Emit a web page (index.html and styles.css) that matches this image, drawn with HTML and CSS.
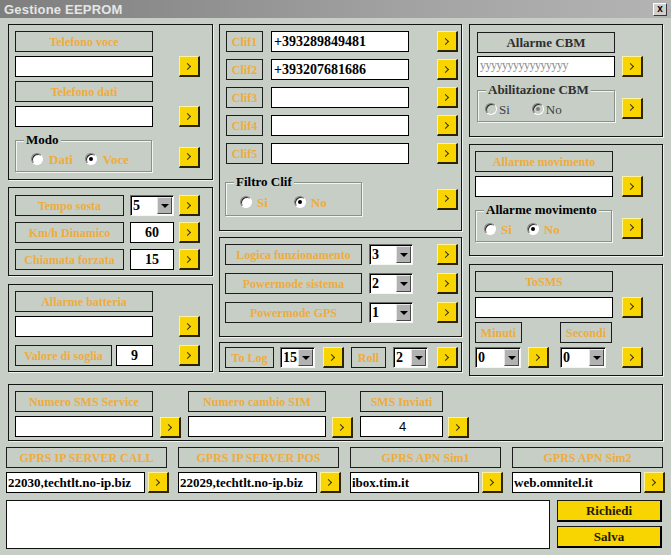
FILE: index.html
```html
<!DOCTYPE html>
<html>
<head>
<meta charset="utf-8">
<title>Gestione EEPROM</title>
<link rel="stylesheet" href="styles.css">
</head>
<body>
<div class="window">
  <div class="titlebar"><span class="title">Gestione EEPROM</span><span class="close">x</span></div>
  <div class="content">
    <div class="columns">
      <div class="col col-left">
        <section class="panel p-phone">
          <div class="lbl">Telefono voce</div>
          <div class="row"><div class="field"></div><div class="btn"></div></div>
          <div class="lbl">Telefono dati</div>
          <div class="row"><div class="field"></div><div class="btn"></div></div>
          <div class="row grow">
            <div class="group">
              <span class="legend">Modo</span>
              <div class="radios"><span class="radio"><i class="dot"></i>Dati</span><span class="radio"><i class="dot on"></i>Voce</span></div>
            </div>
            <div class="btn"></div>
          </div>
        </section>
        <section class="panel p-time">
          <div class="row"><div class="lbl">Tempo sosta</div><div class="sel"><span class="v">5</span><span class="dd"></span></div><div class="btn"></div></div>
          <div class="row"><div class="lbl">Km/h Dinamico</div><div class="field num">60</div><div class="btn"></div></div>
          <div class="row"><div class="lbl">Chiamata forzata</div><div class="field num">15</div><div class="btn"></div></div>
        </section>
        <section class="panel p-batt">
          <div class="lbl wide">Allarme batteria</div>
          <div class="row"><div class="field wide"></div><div class="btn"></div></div>
          <div class="row last"><div class="lbl">Valore di soglia</div><div class="field num">9</div><div class="btn"></div></div>
        </section>
      </div>

      <div class="col col-mid">
        <section class="panel p-clif">
          <div class="row"><div class="lbl">Clif1</div><div class="field">+393289849481</div><div class="btn"></div></div>
          <div class="row"><div class="lbl">Clif2</div><div class="field">+393207681686</div><div class="btn"></div></div>
          <div class="row"><div class="lbl">Clif3</div><div class="field"></div><div class="btn"></div></div>
          <div class="row"><div class="lbl">Clif4</div><div class="field"></div><div class="btn"></div></div>
          <div class="row"><div class="lbl">Clif5</div><div class="field"></div><div class="btn"></div></div>
          <div class="row grow">
            <div class="group">
              <span class="legend">Filtro Clif</span>
              <div class="radios"><span class="radio"><i class="dot"></i>Si</span><span class="radio"><i class="dot on"></i>No</span></div>
            </div>
            <div class="btn"></div>
          </div>
        </section>
        <section class="panel p-logic">
          <div class="row"><div class="lbl">Logica funzionamento</div><div class="sel"><span class="v">3</span><span class="dd"></span></div><div class="btn"></div></div>
          <div class="row"><div class="lbl">Powermode sistema</div><div class="sel"><span class="v">2</span><span class="dd"></span></div><div class="btn"></div></div>
          <div class="row"><div class="lbl">Powermode GPS</div><div class="sel"><span class="v">1</span><span class="dd"></span></div><div class="btn"></div></div>
        </section>
        <section class="panel p-log">
          <div class="lbl log-lbl">To Log</div>
          <div class="sel"><span class="v">15</span><span class="dd"></span></div>
          <div class="btn"></div>
          <div class="lbl roll-lbl">Roll</div>
          <div class="sel"><span class="v">2</span><span class="dd"></span></div>
          <div class="btn"></div>
        </section>
      </div>

      <div class="col col-right">
        <section class="panel p-cbm">
          <div class="lbl dark">Allarme CBM</div>
          <div class="row"><div class="field ghost">yyyyyyyyyyyyyyyy</div><div class="btn"></div></div>
          <div class="row grow">
            <div class="group">
              <span class="legend dim">Abilitazione CBM</span>
              <div class="radios"><span class="radio off"><i class="dot"></i>Si</span><span class="radio off"><i class="dot on"></i>No</span></div>
            </div>
            <div class="btn"></div>
          </div>
        </section>
        <section class="panel p-move">
          <div class="lbl">Allarme movimento</div>
          <div class="row"><div class="field"></div><div class="btn"></div></div>
          <div class="row grow">
            <div class="group">
              <span class="legend">Allarme movimento</span>
              <div class="radios"><span class="radio"><i class="dot"></i>Si</span><span class="radio"><i class="dot on"></i>No</span></div>
            </div>
            <div class="btn"></div>
          </div>
        </section>
        <section class="panel p-tosms">
          <div class="lbl">ToSMS</div>
          <div class="row"><div class="field"></div><div class="btn"></div></div>
          <div class="row"><div class="lbl min-lbl">Minuti</div><div class="lbl sec-lbl">Secondi</div></div>
          <div class="row"><div class="sel"><span class="v">0</span><span class="dd"></span></div><div class="btn"></div><div class="sel sec-sel"><span class="v">0</span><span class="dd"></span></div><div class="btn"></div></div>
        </section>
      </div>
    </div>

    <section class="panel p-sms">
      <div class="stack s1"><div class="lbl">Numero SMS Service</div><div class="field"></div></div>
      <div class="btn"></div>
      <div class="stack s2"><div class="lbl">Numero cambio SIM</div><div class="field"></div></div>
      <div class="btn"></div>
      <div class="stack s3"><div class="lbl">SMS Inviati</div><div class="field sans">4</div></div>
      <div class="btn"></div>
    </section>

    <div class="gprs">
      <div class="cell wide-cell"><div class="lbl">GPRS IP SERVER CALL</div><div class="row"><div class="field small">22030,techtlt.no-ip.biz</div><div class="btn"></div></div></div>
      <div class="cell wide-cell"><div class="lbl">GPRS IP SERVER POS</div><div class="row"><div class="field small">22029,techtlt.no-ip.biz</div><div class="btn"></div></div></div>
      <div class="cell"><div class="lbl">GPRS APN Sim1</div><div class="row"><div class="field small">ibox.tim.it</div><div class="btn"></div></div></div>
      <div class="cell"><div class="lbl">GPRS APN Sim2</div><div class="row"><div class="field small">web.omnitel.it</div><div class="btn"></div></div></div>
    </div>

    <div class="bottom">
      <div class="log"></div>
      <div class="actions">
        <div class="bigbtn">Richiedi</div>
        <div class="bigbtn">Salva</div>
      </div>
    </div>
  </div>
</div>
</body>
</html>
```

FILE: styles.css
```css
* { box-sizing: border-box; }

body {
  margin: 0;
  background: #c6cec6;
  font-family: "Liberation Serif", "Times New Roman", serif;
}

.window {
  width: 671px;
  height: 555px;
  background: #c6cec6;
  overflow: hidden;
}

/* ---------- title bar ---------- */
.titlebar {
  height: 18px;
  background: linear-gradient(90deg, #7e7e7e 0%, #a2a2a2 60%, #b4b4b4 100%);
  display: flex;
  align-items: center;
  justify-content: space-between;
  padding: 0 4px 0 4px;
}
.title {
  font: bold 13px/1 "Liberation Sans Narrow", "Liberation Sans", Arial, sans-serif;
  color: #e4e6e4;
  letter-spacing: 0.2px;
}
.close {
  width: 14px;
  height: 13px;
  background: #d0d0d0;
  border: 1px solid;
  border-color: #ffffff #3a3a3a #3a3a3a #ffffff;
  font: bold 10px/10px "Liberation Sans", Arial, sans-serif;
  color: #000;
  display: flex;
  align-items: center;
  justify-content: center;
}

.content { padding: 6px 6px 0 6px; }

.columns {
  display: flex;
  align-items: flex-start;
  margin-left: 2px;
}
.col { display: flex; flex-direction: column; }
.col-left { width: 205px; }
.col-mid { width: 243px; margin-left: 6px; }
.col-right { width: 194px; margin-left: 7px; }

/* ---------- generic pieces ---------- */
.panel {
  border: 1px solid #141414;
  box-shadow: 1px 1px 0 #eef2ee;
  display: flex;
  flex-direction: column;
}

.row { display: flex; align-items: center; }

.lbl {
  height: 21px;
  flex-shrink: 0;
  border: 1px solid #1c1c1c;
  display: flex;
  align-items: center;
  justify-content: center;
  white-space: nowrap;
  font: bold 12px/1 "Liberation Serif", "Times New Roman", serif;
  color: #eeac3c;
}
.lbl.dark { color: #2e2e2e; font-size: 13px; }

.field {
  height: 21px;
  flex-shrink: 0;
  background: #ffffff;
  border: 1px solid #000;
  padding-left: 2px;
  font: bold 14px/19px "Liberation Serif", "Times New Roman", serif;
  color: #000;
  white-space: nowrap;
  overflow: hidden;
}
.field.num { text-align: center; padding-left: 0; }
.field.small { font-size: 13px; padding-left: 1px; }
.field.sans { font: 13px/19px "Liberation Sans", Arial, sans-serif; text-align: center; }
.field.ghost {
  font: 12px/17px "Liberation Serif", serif;
  color: #8c8c8c;
  letter-spacing: -0.5px;
}

.btn {
  width: 21px;
  height: 21px;
  flex-shrink: 0;
  background: #f8d400;
  border-style: solid;
  border-width: 1px 2px 2px 1px;
  border-color: #fff39a #2a2300 #2a2300 #fff39a;
  display: flex;
  align-items: center;
  justify-content: center;
}
.btn::after {
  content: "";
  width: 4px;
  height: 4px;
  margin-left: -3px;
  border-top: 1px solid #3a3000;
  border-right: 1px solid #3a3000;
  transform: rotate(45deg);
}

.sel {
  display: flex;
  height: 21px;
  flex-shrink: 0;
  background: #fff;
  border: 1px solid;
  border-color: #6a6a6a #f6f6f6 #f6f6f6 #6a6a6a;
  box-shadow: inset 1px 1px 0 #000;
}
.sel .v {
  flex: 1;
  padding: 1px 0 0 2px;
  font: bold 14px/18px "Liberation Serif", "Times New Roman", serif;
  color: #000;
}
.sel .dd {
  width: 15px;
  margin: 1px 1px 1px 0;
  background: #b2b2b2;
  border: 1px solid;
  border-color: #e6e6e6 #4a4a4a #4a4a4a #e6e6e6;
  display: flex;
  align-items: center;
  justify-content: center;
}
.sel .dd::after {
  content: "";
  border-left: 4px solid transparent;
  border-right: 4px solid transparent;
  border-top: 4px solid #000;
}

.group {
  position: relative;
  flex-shrink: 0;
  height: 32px;
  border: 1px solid #8a908a;
  box-shadow: inset 1px 1px 0 #f2f5f2, 1px 1px 0 #f2f5f2;
}
.legend {
  position: absolute;
  top: -9px;
  left: 8px;
  padding: 0 2px;
  background: #c6cec6;
  font: bold 13px/16px "Liberation Serif", "Times New Roman", serif;
  color: #000;
  white-space: nowrap;
}
.legend.dim { color: #303030; }

.radios {
  display: flex;
  align-items: center;
  height: 100%;
  padding-top: 6px;
}
.radio {
  display: flex;
  align-items: center;
  font: bold 13px/1 "Liberation Serif", "Times New Roman", serif;
  color: #eeac3c;
  white-space: nowrap;
}
.radio.off { color: #404040; font-weight: normal; }
.dot {
  width: 12px;
  height: 12px;
  border-radius: 50%;
  background: #fff;
  border: 1px solid;
  border-color: #808080 #ffffff #ffffff #808080;
  box-shadow: inset 1px 1px 0 #2a2a2a;
  display: flex;
  align-items: center;
  justify-content: center;
  margin-right: 6px;
}
.dot.on::after {
  content: "";
  width: 4px;
  height: 4px;
  border-radius: 50%;
  background: #000;
}
.radio.off .dot { background: #c6cec6; }
.radio.off .dot.on::after { background: #7a7a7a; }

/* ---------- left column ---------- */
.p-phone { height: 156px; padding: 6px 0 0 6px; gap: 4px; }
.p-phone .lbl, .p-phone .field { width: 138px; }
.p-phone .row .btn { margin-left: 26px; }
.p-phone .row.grow { margin-top: 9px; }
.p-phone .group { width: 137px; }
.p-phone .row.grow .btn { margin-left: 27px; margin-top: 2px; }
.p-phone .radios { padding-left: 15px; }
.p-phone .radio + .radio { margin-left: 12px; }

.p-time { height: 89px; margin-top: 7px; padding: 7px 0 0 6px; gap: 6px; }
.p-time .lbl { width: 109px; }
.p-time .sel, .p-time .field { width: 44px; margin-left: 6px; }
.p-time .btn { margin-left: 5px; }

.p-batt { height: 88px; margin-top: 8px; padding: 6px 0 0 6px; gap: 4px; }
.p-batt .wide { width: 138px; }
.p-batt .row .btn { margin-left: 26px; }
.p-batt .row.last { margin-top: 4px; }
.p-batt .row.last .lbl { width: 97px; }
.p-batt .row.last .field { width: 37px; margin-left: 4px; }

/* ---------- middle column ---------- */
.p-clif { height: 207px; padding: 6px 0 0 6px; gap: 7px; }
.p-clif .lbl { width: 37px; }
.p-clif .field { width: 138px; margin-left: 8px; }
.p-clif .btn { margin-left: 28px; }
.p-clif .row.grow { margin-top: 11px; }
.p-clif .group { width: 137px; height: 34px; margin-left: -1px; }
.p-clif .row.grow .btn { margin-left: 75px; }
.p-clif .radios { padding-left: 14px; }
.p-clif .radio .dot { margin-right: 5px; }
.p-clif .radio + .radio { margin-left: 26px; }

.p-logic { height: 100px; margin-top: 6px; padding: 6px 0 0 5px; gap: 8px; }
.p-logic .lbl { width: 137px; }
.p-logic .sel { width: 44px; margin-left: 7px; }
.p-logic .btn { margin-left: 24px; }

.p-log {
  height: 30px;
  margin-top: 5px;
  padding: 4px 0 0 5px;
  flex-direction: row;
  align-items: flex-start;
}
.p-log .log-lbl { width: 49px; }
.p-log .roll-lbl { width: 35px; margin-left: 7px; }
.p-log .sel { width: 35px; margin-left: 6px; }
.p-log .roll-lbl + .sel { margin-left: 7px; }
.p-log .btn { margin-left: 8px; }
.p-log .roll-lbl + .sel + .btn { margin-left: 9px; }

/* ---------- right column ---------- */
.p-cbm { height: 113px; padding: 7px 0 0 7px; gap: 3px; }
.p-cbm .lbl, .p-cbm .field { width: 138px; }
.p-cbm .row .btn { margin-left: 7px; }
.p-cbm .row.grow { margin-top: 10px; }
.p-cbm .group { width: 138px; }
.p-cbm .row.grow .btn { margin-top: 4px; }
.p-cbm .radios { padding-left: 7px; }
.p-cbm .radio .dot { margin-right: 2px; }
.p-cbm .radio + .radio { margin-left: 22px; }

.p-move { height: 112px; margin-top: 7px; padding: 6px 0 0 5px; gap: 4px; }
.p-move .lbl, .p-move .field { width: 138px; }
.p-move .row .btn { margin-left: 9px; }
.p-move .row.grow { margin-top: 9px; }
.p-move .group { width: 137px; }
.p-move .row.grow .btn { margin-left: 10px; margin-top: 4px; }
.p-move .radios { padding-left: 8px; }
.p-move .radio .dot { margin-right: 5px; }
.p-move .radio + .radio { margin-left: 15px; }

.p-tosms { height: 112px; margin-top: 8px; padding: 6px 0 0 5px; gap: 4px; }
.p-tosms > .lbl, .p-tosms .field { width: 138px; }
.p-tosms .field { margin-top: 1px; }
.p-tosms .field + .btn { margin-left: 9px; }
.p-tosms .min-lbl { width: 47px; }
.p-tosms .sec-lbl { width: 52px; margin-left: 38px; }
.p-tosms .sel { width: 46px; }
.p-tosms .sel + .btn { margin-left: 7px; }
.p-tosms .sel.sec-sel { margin-left: 11px; }
.p-tosms .sel.sec-sel + .btn { margin-left: 16px; }

/* ---------- SMS band ---------- */
.p-sms {
  width: 655px;
  height: 57px;
  margin: 8px 0 0 2px;
  padding: 6px 0 0 6px;
  flex-direction: row;
  align-items: flex-start;
}
.stack { display: flex; flex-direction: column; gap: 4px; flex-shrink: 0; }
.stack .lbl, .stack .field { width: 100%; }
.s1, .s2 { width: 138px; }
.s3 { width: 83px; }
.p-sms .btn { margin-top: 26px; margin-left: 7px; }
.p-sms .s2 { margin-left: 7px; }
.p-sms .s2 + .btn { margin-left: 6px; }
.p-sms .s3 { margin-left: 7px; }
.p-sms .s3 + .btn { margin-left: 5px; }

/* ---------- GPRS row ---------- */
.gprs { display: flex; gap: 9px; margin-top: 6px; }
.cell { display: flex; flex-direction: column; gap: 4px; width: 153px; }
.cell .lbl { width: 151px; }
.cell .field { width: 129px; }
.cell .btn { margin-left: 3px; }
.wide-cell { width: 163px; }
.wide-cell .lbl { width: 161px; }
.wide-cell .field { width: 139px; }

/* ---------- bottom ---------- */
.bottom { display: flex; margin-top: 7px; }
.log {
  width: 544px;
  height: 49px;
  background: #fff;
  border: 1px solid #111;
}
.actions {
  width: 105px;
  margin-left: 7px;
  display: flex;
  flex-direction: column;
  gap: 4px;
}
.bigbtn {
  height: 22px;
  background: #f8d400;
  border-style: solid;
  border-width: 1px 2px 2px 1px;
  border-color: #1a1a1a #000 #000 #1a1a1a;
  display: flex;
  align-items: center;
  justify-content: center;
  font: bold 13px/1 "Liberation Serif", "Times New Roman", serif;
  color: #241a00;
}
```
